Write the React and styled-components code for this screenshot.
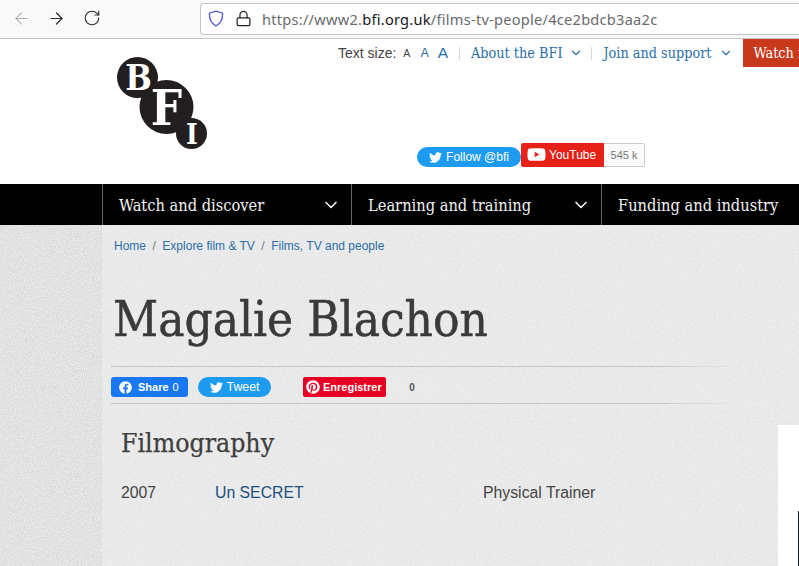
import React from "react";
import styled, { createGlobalStyle } from "styled-components";
import { ArrowLeft, ArrowRight, RotateCw, Lock, ChevronDown } from "lucide-react";
import { FaTwitter, FaFacebook, FaPinterest, FaYoutube } from "react-icons/fa";

const noise = (freq, gain, offset) =>
  `url("data:image/svg+xml,%3Csvg xmlns='http://www.w3.org/2000/svg' width='240' height='240'%3E%3Cfilter id='n'%3E%3CfeTurbulence type='fractalNoise' baseFrequency='${freq}' numOctaves='3' stitchTiles='stitch'/%3E%3CfeColorMatrix values='0 0 0 0 1 0 0 0 0 1 0 0 0 0 1 ${gain} 0 0 0 ${offset}'/%3E%3C/filter%3E%3Crect width='240' height='240' filter='url(%23n)'/%3E%3C/svg%3E")`;

const Global = createGlobalStyle`
  html, body { margin: 0; padding: 0; height: 100%; overflow: hidden; background: #e2e2e2; }
  #root { height: 100%; }
  a { text-decoration: none; color: inherit; }
  * { box-sizing: border-box; }
`;

const SLAB = `"DejaVu Serif Condensed", "DejaVu Serif", serif`;
const SANS = `"Liberation Sans", Arial, sans-serif`;

const Page = styled.div`
  position: relative;
  width: 799px;
  height: 566px;
  overflow: hidden;
  display: flex;
  flex-direction: column;
  font-family: ${SANS};
`;

const BrowserBar = styled.div`
  flex: 0 0 39px;
  display: flex;
  align-items: center;
  background: #f9f9fa;
  border-bottom: 1px solid #c6c6c8;
  padding: 0 0 2px 12px;
`;
const NavIcons = styled.div`
  display: flex;
  align-items: center;
  gap: 17px;
  width: 188px;
  color: #2c2c30;
  svg:first-child { margin-right: -1px; }
`;
const UrlBox = styled.div`
  flex: 1;
  height: 32px;
  margin-top: 1px;
  display: flex;
  align-items: center;
  background: #fff;
  border: 1px solid #c4c4c6;
  border-right: none;
  border-radius: 4px 0 0 4px;
  padding-left: 7px;
  gap: 11px;
`;
const Url = styled.div`
  font-family: "Noto Sans", "Open Sans", sans-serif;
  font-size: 14.6px;
  letter-spacing: 0.25px;
  color: #6a6a6e;
  white-space: nowrap;
  margin-left: -1px;
  b { font-weight: 400; color: #17171a; }
`;

const Header = styled.header`
  flex: 0 0 145px;
  background: #fff;
  display: flex;
  padding-left: 117px;
  overflow: hidden;
`;
const Logo = styled.svg`
  flex: 0 0 91px;
  width: 91px;
  height: 93px;
  margin-top: 18px;
`;
const HeaderRight = styled.div`
  flex: 1;
  display: flex;
  flex-direction: column;
  min-width: 0;
`;
const TopLinks = styled.div`
  display: flex;
  align-items: center;
  height: 28px;
  padding-left: 130px;
  white-space: nowrap;
  font-family: ${SLAB};
`;
const TextSizeLabel = styled.span`
  font-family: ${SANS};
  font-size: 14px;
  color: #444;
  margin-right: 7px;
`;
const SizeA = styled.span`
  font-family: ${SANS};
  font-size: ${(p) => p.$s}px;
  color: ${(p) => p.$c};
  margin-right: ${(p) => p.$m}px;
`;
const Sep = styled.span`
  flex: none;
  width: 1px;
  height: 13px;
  background: #d8d8d8;
  margin: 0 11px 0 0;
`;
const TopLink = styled.a`
  display: flex;
  align-items: center;
  gap: 7px;
  font-size: 14.3px;
  color: #2a6ea8;
  margin-right: ${(p) => p.$m}px;
`;
const Watch = styled.a`
  flex: none;
  height: 28px;
  display: flex;
  align-items: center;
  padding-left: 11px;
  width: 100px;
  background: #c8391c;
  color: #fff;
  font-size: 14.3px;
`;
const SocialRow = styled.div`
  display: flex;
  align-items: flex-start;
  margin-top: 76px;
  padding-left: 209px;
`;
const FollowBtn = styled.a`
  margin-top: 4px;
  width: 104px;
  height: 20px;
  border-radius: 10px;
  background: #1d9bf0;
  color: #fff;
  display: flex;
  align-items: center;
  justify-content: center;
  gap: 4px;
  font-size: 12px;
`;
const YtBtn = styled.a`
  width: 83px;
  height: 24px;
  background: #e62117;
  border-radius: 2px 0 0 2px;
  color: #fff;
  display: flex;
  align-items: center;
  padding: 0 0 1px 6px;
  gap: 3px;
  font-size: 12px;
`;
const YtCount = styled.span`
  width: 41px;
  height: 24px;
  border: 1px solid #ccc;
  border-left: none;
  border-radius: 0 2px 2px 0;
  background: #fafafa;
  color: #777;
  font-size: 11px;
  display: flex;
  align-items: center;
  justify-content: center;
`;

const MainNav = styled.nav`
  flex: 0 0 41px;
  background: #000;
  display: flex;
  padding-left: 102px;
  white-space: nowrap;
`;
const NavItem = styled.a`
  flex: 0 0 ${(p) => p.$w}px;
  display: flex;
  align-items: center;
  justify-content: space-between;
  padding: 2px 10px 0 16px;
  border-left: 1px solid #666;
  color: #f2f2f2;
  font-family: ${SLAB};
  font-size: 16.3px;
  svg { margin-top: -2px; }
`;

const Body = styled.div`
  flex: 1;
  display: flex;
  background-color: #d9d9d9;
  background-image: ${noise(0.9, 1.3, -0.42)};
`;
const Content = styled.main`
  flex: 1;
  margin-left: 102px;
  padding: 14px 0 0 0;
  background-color: #e5e5e5;
  background-image: ${noise(0.9, 1, -0.33)};
  min-width: 0;
`;
const Crumbs = styled.div`
  display: flex;
  gap: 6.5px;
  padding-left: 12px;
  font-size: 12px;
  line-height: 14px;
  color: #2a6ea8;
  span { color: #777; }
`;
const Title = styled.h1`
  margin: 38px 0 0 11px;
  font-family: ${SLAB};
  font-weight: 400;
  font-size: 49px;
  line-height: 58px;
  color: #3a3a3a;
  white-space: nowrap;
  -webkit-text-stroke: 0.5px #3a3a3a;
`;
const ShareBar = styled.div`
  margin: 17px 0 0 9px;
  width: 630px;
  height: 38px;
  padding-top: 4px;
  border-top: 1px solid;
  border-bottom: 1px solid;
  border-left: 0;
  border-right: 0;
  border-image: linear-gradient(to right, #c4c4c4 85%, rgba(196, 196, 196, 0)) 1;
  display: flex;
  align-items: center;
`;
const FbBtn = styled.a`
  width: 77px;
  height: 20px;
  border-radius: 3px;
  background: #1877f2;
  color: #fff;
  font-size: 11px;
  font-weight: 700;
  display: flex;
  align-items: center;
  padding-left: 8px;
  gap: 6px;
  span { font-weight: 400; margin-left: -2px; }
`;
const TweetBtn = styled.a`
  margin-left: 10px;
  width: 73px;
  height: 20px;
  border-radius: 10px;
  background: #1d9bf0;
  color: #fff;
  font-size: 12.3px;
  display: flex;
  align-items: center;
  justify-content: center;
  gap: 4px;
`;
const PinBtn = styled.a`
  margin-left: 32px;
  width: 83px;
  height: 20px;
  border-radius: 2px;
  background: #e60023;
  color: #fff;
  font-size: 11px;
  font-weight: 700;
  display: flex;
  align-items: center;
  padding-left: 3px;
  gap: 3px;
`;
const PinCount = styled.span`
  width: 52px;
  height: 20px;
  background: #eaeaea;
  border-radius: 0 3px 3px 0;
  color: #555;
  font-size: 10px;
  font-weight: 700;
  display: flex;
  align-items: center;
  justify-content: center;
`;
const SectionTitle = styled.h2`
  margin: 22px 0 0 19px;
  font-family: ${SLAB};
  font-weight: 400;
  font-size: 26.4px;
  line-height: 33px;
  color: #3e3e3e;
  -webkit-text-stroke: 0.25px #3e3e3e;
`;
const FilmRow = styled.div`
  margin-top: 24px;
  padding-left: 19px;
  display: grid;
  grid-template-columns: 94px 268px 1fr;
  font-size: 15.8px;
  line-height: 20px;
  color: #444;
`;
const FilmLink = styled.a`
  color: #1c4f7f;
`;
const AdBlock = styled.div`
  position: absolute;
  left: 778px;
  top: 425px;
  width: 21px;
  height: 141px;
  background: #fff;
  &::after {
    content: "";
    position: absolute;
    left: 20px;
    top: 86px;
    width: 1px;
    height: 55px;
    background: #1a2230;
  }
`;

export default function App() {
  return (
    <Page>
      <Global />
      <BrowserBar>
        <NavIcons>
          <ArrowLeft size={19} strokeWidth={1.3} color="#a9a9ad" />
          <ArrowRight size={19} strokeWidth={1.5} />
          <RotateCw size={18} strokeWidth={1.5} />
        </NavIcons>
        <UrlBox>
          <svg width="16" height="17" viewBox="0 0 16 17" fill="none">
            <path d="M8 1.2 L14.6 3.2 C14.8 9 12.8 13.4 8 15.8 C3.2 13.4 1.2 9 1.4 3.2 Z" stroke="#5a63d6" strokeWidth="1.4" strokeLinejoin="round" />
          </svg>
          <Lock size={17} strokeWidth={1.7} color="#222" />
          <Url>https://www2.<b>bfi.org.uk</b>/films-tv-people/4ce2bdcb3aa2c</Url>
        </UrlBox>
      </BrowserBar>

      <Header>
        <Logo viewBox="0 0 91 93">
          <g fill="#231f20">
            <circle cx="20.5" cy="20.5" r="20.5" />
            <circle cx="49.5" cy="50" r="27" />
            <circle cx="74.5" cy="76.5" r="15.5" />
          </g>
          <g fill="#fff" fontFamily="'DejaVu Serif Condensed', 'DejaVu Serif', serif" fontWeight="700" textAnchor="middle">
            <text x="21.5" y="33" fontSize="35">B</text>
            <text x="49.5" y="68" fontSize="49">F</text>
            <text x="75" y="87" fontSize="28">I</text>
          </g>
        </Logo>
        <HeaderRight>
          <TopLinks>
            <TextSizeLabel>Text size:</TextSizeLabel>
            <SizeA $s={10.5} $c="#444" $m={10}>A</SizeA>
            <SizeA $s={12.5} $c="#2a6ea8" $m={9}>A</SizeA>
            <SizeA $s={15.5} $c="#2a6ea8" $m={11}>A</SizeA>
            <Sep />
            <TopLink $m={8}>About the BFI <ChevronDown size={14} /></TopLink>
            <Sep />
            <TopLink $m={10}>Join and support <ChevronDown size={14} /></TopLink>
            <Watch>Watch now</Watch>
          </TopLinks>
          <SocialRow>
            <FollowBtn><FaTwitter size={13} /> Follow @bfi</FollowBtn>
            <YtBtn><FaYoutube size={19} /> YouTube</YtBtn>
            <YtCount>545 k</YtCount>
          </SocialRow>
        </HeaderRight>
      </Header>

      <MainNav>
        <NavItem $w={249}>Watch and discover <ChevronDown size={20} strokeWidth={2} /></NavItem>
        <NavItem $w={250}>Learning and training <ChevronDown size={20} strokeWidth={2} /></NavItem>
        <NavItem $w={220}>Funding and industry</NavItem>
      </MainNav>

      <Body>
        <Content>
          <Crumbs>
            <a>Home</a><span>/</span><a>Explore film &amp; TV</a><span>/</span><a>Films, TV and people</a>
          </Crumbs>
          <Title>Magalie Blachon</Title>
          <ShareBar>
            <FbBtn><FaFacebook size={13} /> Share <span>0</span></FbBtn>
            <TweetBtn><FaTwitter size={13} /> Tweet</TweetBtn>
            <PinBtn><FaPinterest size={14} /> Enregistrer</PinBtn>
            <PinCount>0</PinCount>
          </ShareBar>
          <SectionTitle>Filmography</SectionTitle>
          <FilmRow>
            <span>2007</span>
            <FilmLink>Un SECRET</FilmLink>
            <span>Physical Trainer</span>
          </FilmRow>
        </Content>
      </Body>
      <AdBlock />
    </Page>
  );
}
